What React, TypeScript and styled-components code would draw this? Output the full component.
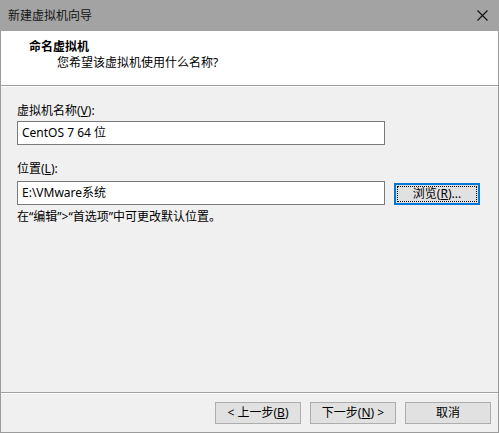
import styled, { createGlobalStyle } from "styled-components";

const Global = createGlobalStyle`
  html, body {
    margin: 0;
    padding: 0;
    background: #f0f0f0;
  }
  body {
    font-family: "Noto Sans", "Noto Sans CJK SC", sans-serif;
    font-size: 12px;
    color: #000;
  }
`;

const Window = styled.div`
  box-sizing: border-box;
  width: 499px;
  height: 433px;
  display: flex;
  flex-direction: column;
  background: #f0f0f0;
  border: 1px solid #9b9b9b;
  border-top: none;
`;

const TitleBar = styled.div`
  height: 31px;
  margin: 0 -1px;
  background: #a3a3a3;
  display: flex;
  align-items: center;
  justify-content: space-between;
  padding: 0 11px 0 8px;
  flex-shrink: 0;
`;

const TitleText = styled.span`
  font-size: 12px;
  line-height: 16px;
  color: #141414;
`;

const CloseIcon = () => (
  <svg width="11" height="11" viewBox="0 0 11 11">
    <path d="M0.5 0.5 L10.5 10.5 M10.5 0.5 L0.5 10.5" stroke="#111" strokeWidth="1.1" fill="none" />
  </svg>
);

const Header = styled.div`
  height: 55px;
  background: #fff;
  border-bottom: 1px solid #a0a0a0;
  box-shadow: 0 1px 0 #fff;
  padding: 8px 0 0 28px;
  box-sizing: border-box;
  flex-shrink: 0;
`;

const HeaderTitle = styled.div`
  font-weight: bold;
  line-height: 16px;
`;

const HeaderSub = styled.div`
  line-height: 16px;
  margin-left: 28px;
`;

const Body = styled.div`
  flex: 1;
  padding: 17px 0 0 16px;
`;

const Label = styled.div<{ $gap?: number }>`
  line-height: 16px;
  margin-top: ${(p) => p.$gap ?? 0}px;
`;

const Row = styled.div<{ $gap?: number }>`
  display: flex;
  align-items: flex-end;
  gap: 9px;
  margin-top: ${(p) => p.$gap ?? 0}px;
`;

const TextBox = styled.div`
  box-sizing: border-box;
  width: 368px;
  height: 24px;
  background: #fff;
  border: 1px solid #7a7a7a;
  padding-left: 4px;
  display: flex;
  align-items: center;
  line-height: 16px;
`;

const Hint = styled.div`
  line-height: 16px;
  margin-top: 4px;
`;

const Button = styled.button<{ $focus?: boolean }>`
  box-sizing: border-box;
  width: 86px;
  height: 22px;
  padding: 0;
  margin: 0;
  font: inherit;
  color: #000;
  background: #e1e1e1;
  border: 1px solid ${(p) => (p.$focus ? "#0078d7" : "#adadad")};
  box-shadow: ${(p) => (p.$focus ? "inset 0 0 0 1px #0078d7" : "none")};
  outline: ${(p) => (p.$focus ? "1px dotted #000" : "none")};
  outline-offset: -4px;
  line-height: 16px;
  cursor: default;
`;

const Footer = styled.div`
  flex-shrink: 0;
  border-top: 1px solid #a0a0a0;
  box-shadow: inset 0 1px 0 #fff;
  padding: 9px 7px 8px 0;
  display: flex;
  justify-content: flex-end;
  gap: 9px;
`;

export default function App() {
  return (
    <>
      <Global />
      <Window>
        <TitleBar>
          <TitleText>新建虚拟机向导</TitleText>
          <CloseIcon />
        </TitleBar>
        <Header>
          <HeaderTitle>命名虚拟机</HeaderTitle>
          <HeaderSub>您希望该虚拟机使用什么名称?</HeaderSub>
        </Header>
        <Body>
          <Label>
            虚拟机名称(<u>V</u>):
          </Label>
          <Row $gap={2}>
            <TextBox>CentOS 7 64 位</TextBox>
          </Row>
          <Label $gap={16}>
            位置(<u>L</u>):
          </Label>
          <Row $gap={4}>
            <TextBox>E:\VMware系统</TextBox>
            <Button $focus>
              浏览(<u>R</u>)...
            </Button>
          </Row>
          <Hint>在“编辑”&gt;“首选项”中可更改默认位置。</Hint>
        </Body>
        <Footer>
          <Button>
            &lt; 上一步(<u>B</u>)
          </Button>
          <Button>
            下一步(<u>N</u>) &gt;
          </Button>
          <Button>取消</Button>
        </Footer>
      </Window>
    </>
  );
}
